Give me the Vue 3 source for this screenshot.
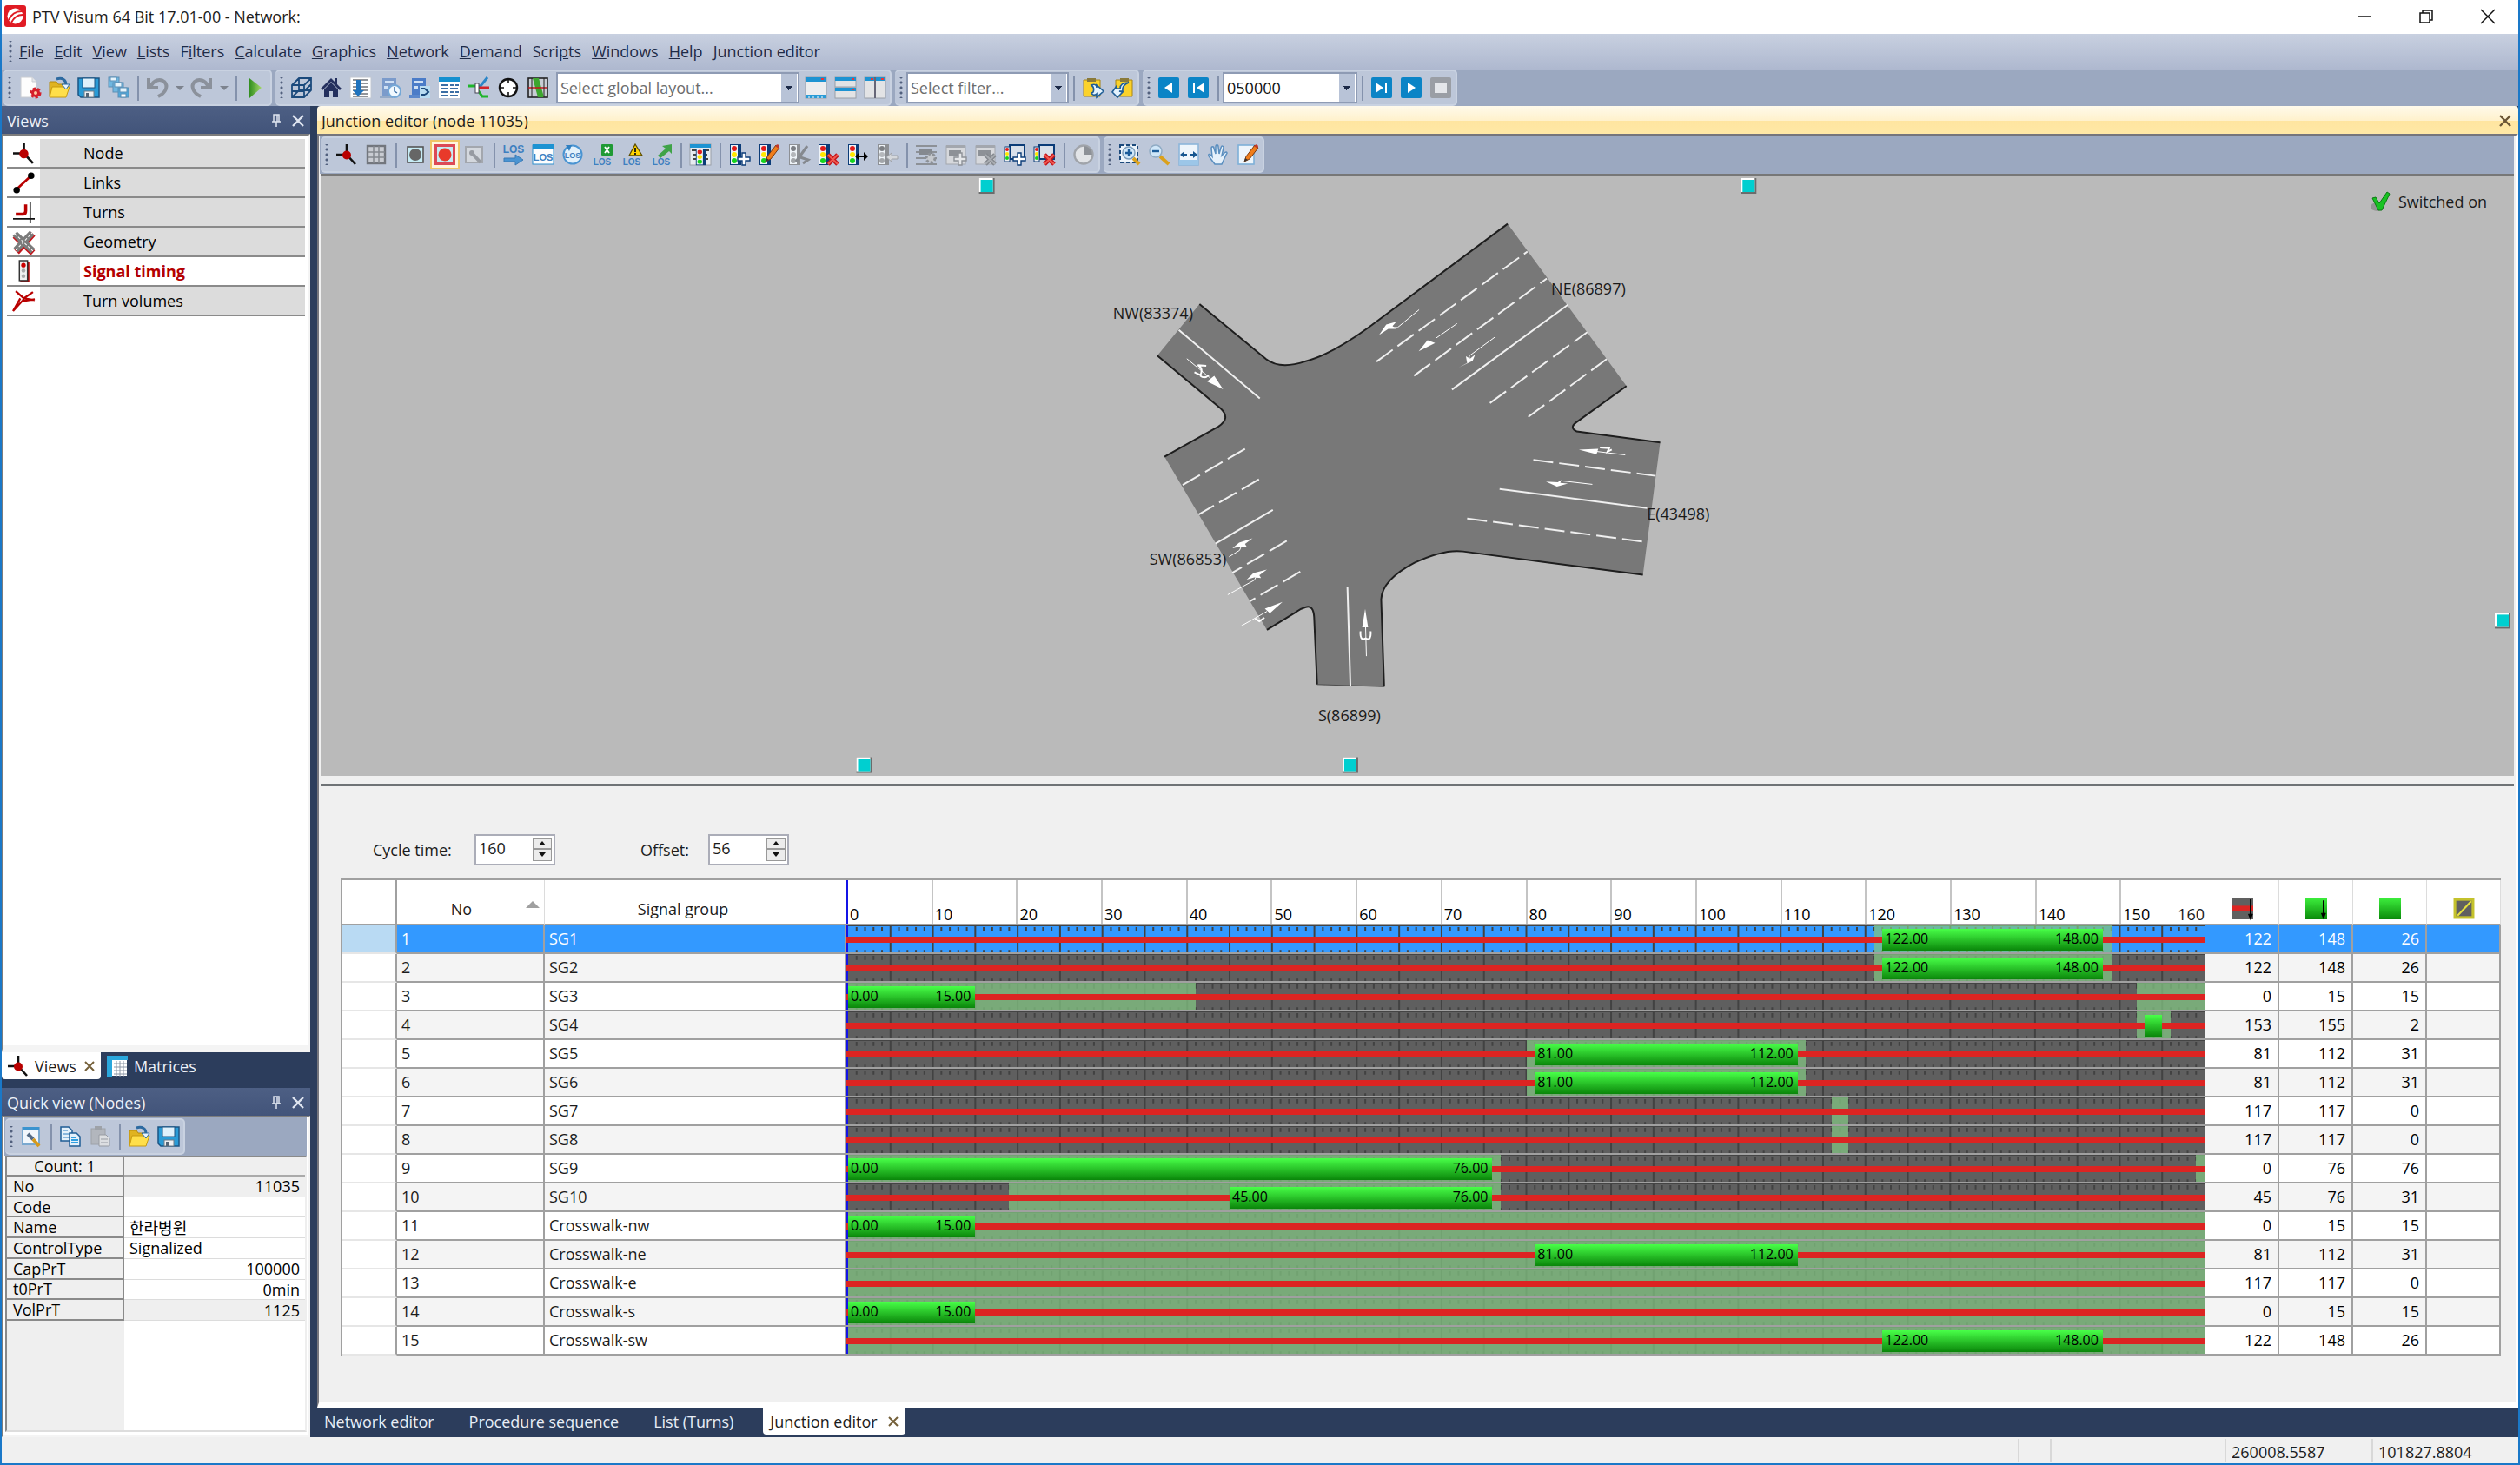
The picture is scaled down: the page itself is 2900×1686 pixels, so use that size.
<script setup>
import { ref } from 'vue'

const los = (y, size = 9) =>
  `<text x="12" y="${y}" font-family="Liberation Sans, sans-serif" font-weight="700" font-size="${size}" text-anchor="middle" fill="#3f7fc0">LOS</text>`
const lamp = (x, body = '#0b3c78', c = ['#e01b1b', '#ffe800', '#16d41c']) =>
  `<rect x="${x}" y="0" width="13" height="24" fill="${body}"/><rect x="${x + 1}" y="1" width="8" height="22" fill="#eef3f8"/>` +
  `<circle cx="${x + 5}" cy="5" r="3" fill="${c[0]}"/><circle cx="${x + 5}" cy="12" r="3" fill="${c[1]}"/><circle cx="${x + 5}" cy="19" r="3" fill="${c[2]}"/>`
const greyLamp = lamp(1, '#8d9095', ['#7d8085', '#b4b7bb', '#a2a5a9'])
const plus = (c = '#0b3c78', f = '#fff') =>
  `<path d="M15 10h4v5h5v4h-5v5h-4v-5h-5v-4h5z" fill="${f}" stroke="${c}" stroke-width="1.4"/>`
const cross = (c = '#c4161c', f = '#ef5a50') =>
  `<path d="M12 12l11 11M23 12l-11 11" stroke="${c}" stroke-width="5"/><path d="M12 12l11 11M23 12l-11 11" stroke="${f}" stroke-width="2"/>`
const pencil =
  '<path d="M8 20l2-6L20 1l4 3-10 13z" fill="#f07d1a" stroke="#7a3a10" stroke-width="1"/><path d="M8 20l1-4 3 2z" fill="#333"/><path d="M19 2l4 3 1-3-2-2z" fill="#c0392b"/>'

const icons = {
  fresh: '<path d="M2 0h13l5 5v18H2z" fill="#fdfdfd" stroke="#c9ccd2"/><path d="M15 0v5h5" fill="#e4e6ea" stroke="#c9ccd2"/><circle cx="19" cy="18" r="5" fill="#d41f2b" stroke="#d41f2b" stroke-width="3" stroke-dasharray="3 2"/><circle cx="19" cy="18" r="2" fill="#ffc9a0"/>',
  open: '<path d="M1 5h8l2 3h9v14H1z" fill="#e0b321" stroke="#b58a0c"/><path d="M4 11h20l-4 12H1z" fill="#ffdf4a" stroke="#c79a10"/><path d="M9 2c7-2 11 1 11 7" fill="none" stroke="#2d6aa0" stroke-width="3"/><path d="M15 8h9l-4 6z" fill="#e8f4ff" stroke="#2d6aa0"/>',
  save: '<path d="M0 1h24v22H3l-3-3z" fill="#2a9bd6" stroke="#1b5584" stroke-width="1.5"/><rect x="5" y="1" width="14" height="11" fill="#dff1fb" stroke="#1b5584"/><rect x="7" y="16" width="11" height="7" fill="#eef0f2" stroke="#6f7c88"/><rect x="9" y="18" width="3" height="5" fill="#567"/>',
  saveall: '<g stroke="#5d8fb5"><rect x="1" y="0" width="12" height="11" fill="#6fb7e0"/><rect x="3" y="0" width="7" height="4" fill="#e6f4fc"/><rect x="6" y="6" width="12" height="11" fill="#6fb7e0"/><rect x="8" y="6" width="8" height="5" fill="#e6f4fc"/><rect x="12" y="12" width="12" height="11" fill="#4fa9dc"/><rect x="14" y="12" width="8" height="5" fill="#e6f4fc"/><rect x="15" y="19" width="6" height="4" fill="#fff"/></g>',
  undo: '<path d="M2 1v11h11" fill="none" stroke="#8b919b" stroke-width="4"/><path d="M4 11C8 3 15 1 20 5c5 5 2 13-7 17" fill="none" stroke="#8b919b" stroke-width="4"/>',
  redo: '<path d="M22 1v11H11" fill="none" stroke="#8b919b" stroke-width="4"/><path d="M20 11C16 3 9 1 4 5c-5 5-2 13 7 17" fill="none" stroke="#8b919b" stroke-width="4"/>',
  play: '<path d="M5 1l14 11L5 24z" fill="url(#gPlay)"/>',
  cube: '<path d="M1 9l8-8h14v14l-8 8H1zM1 9h14v14M15 9l8-8M9 1v14h14M9 15l-8 8M1 16h14l8-8" fill="none" stroke="#1b4a7c" stroke-width="1.8"/>',
  home: '<path d="M0 13L12 1l4 4V1h3v7l5 5-2 2L12 5 2 15z" fill="#24305e"/><path d="M4 14l8-8 8 8v9h-6v-7h-4v7H4z" fill="#24305e"/>',
  sort: '<rect x="0" y="0" width="24" height="24" fill="#fff" stroke="#c2c8d2"/><path d="M3 3h18M3 7h18M3 11h18M3 15h18M3 19h18M3 22h18" stroke="#6d7178" stroke-width="1.6"/><path d="M7 3h5v12h4l-7 7-6-7h4z" fill="#1e72bd"/>',
  clock: '<path d="M3 1h16v20H3z" fill="#7b9bcb"/><path d="M0 21h15v3H0z" fill="#94aac8"/><rect x="6" y="4" width="10" height="3" fill="#cfe0f4"/><rect x="5" y="10" width="5" height="4" fill="#cfe0f4"/><circle cx="17" cy="16" r="7" fill="#f1f9ff" stroke="#74a7d6" stroke-width="2"/><path d="M17 11v5l3 2" fill="none" stroke="#3b6ea5" stroke-width="1.5"/>',
  tree: '<path d="M3 1h16v20H3z" fill="#4b7cc8"/><path d="M0 20h13v4H0z" fill="#5b88cc"/><rect x="6" y="4" width="10" height="3" fill="#cfe0f4"/><rect x="5" y="10" width="5" height="4" fill="#cfe0f4"/><rect x="12" y="10" width="12" height="14" fill="#b9ddf2"/><path d="M14 13h4M14 20h4M18 13l4 4-4 3" fill="none" stroke="#1b4a7c" stroke-width="2"/>',
  list: '<rect width="24" height="24" fill="#fff"/><rect width="24" height="5" fill="#1590cf"/><path d="M3 9h7M3 13h7M3 17h7M3 21h7M13 9h4M19 9h4M13 13h9M13 17h4M19 17h4M13 21h9" stroke="#3b6ea5" stroke-width="2"/>',
  junction: '<path d="M10 10h4l8-10" fill="none" stroke="#2b86c8" stroke-width="3"/><path d="M0 10h8" stroke="#1fb52a" stroke-width="3"/><path d="M11 12h13" stroke="#d2232a" stroke-width="3"/><path d="M11 15l5 7h7" fill="none" stroke="#1fb52a" stroke-width="3"/><rect x="8" y="7" width="4" height="11" fill="#fff" stroke="#445"/>',
  target: '<circle cx="12" cy="12" r="10" fill="#fff" stroke="#111" stroke-width="2.4"/><path d="M12 1v6M12 17v6M1 12h6M17 12h6" stroke="#111" stroke-width="1.6"/>',
  corridor: '<rect x="1" y="1" width="22" height="22" fill="#c8cdd4" stroke="#222" stroke-width="1.6"/><path d="M6 1h7l6 22h-7z" fill="#3da62f"/><path d="M1 12h22" stroke="#c4161c" stroke-width="1.5"/><path d="M5 1v22M19 1v22" stroke="#222"/>',
  win1: '<rect x="0" y="0" width="24" height="24" fill="#ecedef" stroke="#9a9fa8"/><rect width="24" height="5" fill="#1d93d2"/><rect x="18" y="1" width="3" height="2" fill="#e33"/><rect y="20" width="24" height="4" fill="#2a9bd6"/><path d="M4 22v2M9 22v2M14 22v2M19 22v2" stroke="#fff"/>',
  win2: '<rect width="24" height="11" fill="#e2e3e5" stroke="#9a9fa8"/><rect width="24" height="4" fill="#1d93d2"/><rect y="12" width="24" height="12" fill="#e2e3e5" stroke="#9a9fa8"/><rect y="12" width="24" height="4" fill="#1d93d2"/><path d="M19 2h3M19 14h3" stroke="#e33" stroke-width="2"/>',
  win3: '<rect width="24" height="24" fill="#e2e3e5" stroke="#9a9fa8"/><rect width="24" height="4" fill="#1d93d2"/><path d="M12 0v24" stroke="#667" stroke-width="2"/><path d="M7 2h3M19 2h3" stroke="#e33" stroke-width="2"/>',
  pasteOut: '<path d="M1 3h19v19H1z" fill="#fbd22b" stroke="#a88414"/><rect x="5" y="1" width="10" height="4" fill="#8a7a3a"/><path d="M10 9c4-2 6 0 6 3v-3l8 7-8 7v-4c-2 2-5 2-6-1 3 0 4-6 0-9z" fill="#e3f2fd" stroke="#1f5d95" stroke-width="1.6"/>',
  pasteIn: '<path d="M4 3h19v19H4z" fill="#fbd22b" stroke="#a88414"/><rect x="9" y="1" width="10" height="4" fill="#8a7a3a"/><path d="M19 6c-8 0-10 3-10 7H5v-3l-5 7 6 6 6-6-4-1h4c-1-5 2-8 7-10z" fill="#e3f2fd" stroke="#1f5d95" stroke-width="1.6"/>',
  back: '<rect width="24" height="24" rx="2" fill="#0b84c6"/><path d="M16 6L7 12l9 6z" fill="#fff"/>',
  first: '<rect width="24" height="24" rx="2" fill="#0b84c6"/><path d="M19 6l-9 6 9 6z" fill="#fff"/><path d="M7 6v12" stroke="#fff" stroke-width="2"/>',
  last: '<rect width="24" height="24" rx="2" fill="#0b84c6"/><path d="M5 6l9 6-9 6z" fill="#fff"/><path d="M17 6v12" stroke="#fff" stroke-width="2"/>',
  next: '<rect width="24" height="24" rx="2" fill="#0b84c6"/><path d="M8 6l9 6-9 6z" fill="#fff"/>',
  stop: '<rect width="24" height="24" rx="2" fill="#9a9ea5"/><rect x="5" y="6" width="14" height="12" fill="#e4e6ea"/>',
  node: '<path d="M12 0v12M0 12h12M12 12l10 11" fill="none" stroke="#111" stroke-width="2.6"/><circle cx="12" cy="12.5" r="5" fill="#b90000"/>',
  links: '<path d="M4 19L20 4" stroke="#b90000" stroke-width="2.6"/><circle cx="4" cy="20" r="3.6" fill="#000"/><circle cx="20" cy="4" r="3.6" fill="#000"/>',
  turns: '<path d="M19 0v24M0 19h24" stroke="#111" stroke-width="1.6"/><path d="M3 14h8q3 0 3-4V3" fill="none" stroke="#b90000" stroke-width="3.4"/>',
  geometry: '<path d="M4 23L22 3M2 5l20 19" stroke="#c4161c" stroke-width="7"/><path d="M3 21L21 2M2 3l20 19" stroke="#7b7b7b" stroke-width="7"/><path d="M3 21L21 2M2 3l20 19" stroke="#fff" stroke-width="1" stroke-dasharray="3 2"/>',
  signal: '<rect x="8" y="1" width="10" height="23" fill="#b90000"/><rect x="7" y="0" width="9" height="22" fill="#f1f1f1" stroke="#333" stroke-width="1.4"/><circle cx="11.5" cy="5" r="2.5" fill="#c00"/><circle cx="11.5" cy="11" r="2.2" fill="#aaa"/><circle cx="11.5" cy="17" r="2.2" fill="#aaa"/>',
  volumes: '<path d="M0 23L10 12 24 10M3 1l9 8 12 2M22 2L12 9l-2 4M0 23l8-14" fill="none" stroke="#b90000" stroke-width="2.2"/>',
  grid: '<rect x="2" y="2" width="20" height="20" fill="#c9ccd2" stroke="#72767d" stroke-width="2.4"/><path d="M2 9h20M2 15h20M9 2v20M15 2v20" stroke="#84888f" stroke-width="1.5"/>',
  dotGrey: '<rect x="3" y="3" width="18" height="18" fill="#c6ecf5" stroke="#555" stroke-width="1.6"/><circle cx="12" cy="12" r="7" fill="#666"/>',
  dotRed: '<rect x="1.5" y="1.5" width="21" height="21" fill="#c6ecf5" stroke="#dc4a56" stroke-width="3"/><circle cx="12" cy="12" r="7.5" fill="#e83a2a"/>',
  wrenchGrey: '<rect x="2" y="3" width="19" height="18" fill="#d4d8de" stroke="#a3a7ae" stroke-width="2"/><path d="M8 9l11 12" stroke="#979ba2" stroke-width="4"/><circle cx="9" cy="10" r="3" fill="#979ba2"/>',
  wrench: '<rect x="2" y="2" width="19" height="19" fill="#f2f7fc" stroke="#7aa9d0" stroke-width="2"/><rect x="2" y="1" width="19" height="4" fill="#3b94cf"/><path d="M8 9l6 6" stroke="#556b85" stroke-width="4"/><path d="M14 15l7 8" stroke="#d69a1c" stroke-width="4"/>',
  losArrow: los(10, 12) + '<path d="M1 16h13v-4l9 6-9 6v-4H1z" fill="#4a94d2" stroke="#3a78b2"/>',
  losWin: '<rect y="1" width="24" height="22" fill="#fdfdfd" stroke="#2f8fce"/><rect width="24" height="5" fill="#1d93d2"/>' + los(19, 11),
  losRing: '<circle cx="12" cy="12" r="10.5" fill="#e3f1fb" stroke="#4a94d2" stroke-width="2"/><path d="M4 1l7 0-3 7z" fill="#2f7fc0"/>' + los(16),
  losXls: '<rect x="11" y="0" width="13" height="13" rx="1" fill="#1f9a35"/><path d="M15 3l5 7M20 3l-5 7" stroke="#fff" stroke-width="1.8"/>' + los(24, 10),
  losWarn: '<path d="M16 0l8 13H9z" fill="#ffd400" stroke="#5b4b00" stroke-width="1.3"/><path d="M16 4v5M16 10v2" stroke="#111" stroke-width="1.8"/>' + los(24, 10),
  losUp: '<path d="M8 13L17 5l-4-3L24 0v11l-3-3-10 8z" fill="#3fa348"/>' + los(24, 10),
  signalWin: '<rect x="0" y="0" width="24" height="24" fill="#e7ebf0" stroke="#9a9fa8"/><rect width="24" height="4" fill="#1d93d2"/><path d="M2 7h20M4 12h16M3 17h18" stroke="#444" stroke-width="2"/><g transform="translate(5 5) scale(.9 .8)">' + lamp(2) + '</g>',
  sgAdd: lamp(1) + plus(),
  sgEdit: lamp(1) + pencil,
  sgGrey: greyLamp + '<path d="M9 20L22 2M14 15l9 3-6 4" stroke="#85898f" stroke-width="3" fill="none"/>',
  sgDel: lamp(1) + cross(),
  sgMove: lamp(1) + '<path d="M9 14l5-5v4h5V9l5 5-5 5v-4h-5v4z" fill="#000"/>',
  sgBack: greyLamp + '<path d="M11 15l6-5v3h7v4h-7v3z" fill="#d5d8dc" stroke="#9ea2a8"/>',
  gearGrey: '<path d="M0 2h24M0 9h24M0 16h24M0 23h24" stroke="#8d9197" stroke-width="2"/><rect x="4" y="5" width="14" height="7" fill="#85898f"/><circle cx="17" cy="16" r="5" fill="#c5c8cd" stroke="#8d9197" stroke-width="3" stroke-dasharray="3 2"/>',
  addGrey: '<rect x="1" y="2" width="22" height="21" fill="#d6d8dc" stroke="#a3a7ae"/><rect x="1" y="1" width="22" height="3" fill="#a3a7ae"/><rect x="4" y="7" width="14" height="6" fill="#8d9197"/>' + plus('#8d9197', '#e5e7ea'),
  delGrey: '<rect x="1" y="2" width="22" height="21" fill="#d6d8dc" stroke="#a3a7ae"/><rect x="1" y="1" width="22" height="3" fill="#a3a7ae"/><rect x="4" y="7" width="14" height="6" fill="#8d9197"/>' + cross('#85898f', '#a9adb2'),
  stageAdd: '<rect x="6" y="1" width="17" height="16" fill="#d9e0ea" stroke="#0b3c78" stroke-width="2"/><rect x="0" y="3" width="6" height="17" fill="#eee" stroke="#0b3c78"/><circle cx="3" cy="6" r="2" fill="#e01b1b"/><circle cx="3" cy="11" r="2" fill="#ffe800"/><circle cx="3" cy="16" r="2" fill="#16d41c"/>' + plus(),
  stageDel: '<rect x="6" y="1" width="17" height="16" fill="#d9e0ea" stroke="#0b3c78" stroke-width="2"/><rect x="0" y="3" width="6" height="17" fill="#eee" stroke="#0b3c78"/><circle cx="3" cy="6" r="2" fill="#e01b1b"/><circle cx="3" cy="11" r="2" fill="#ffe800"/><circle cx="3" cy="16" r="2" fill="#16d41c"/>' + cross(),
  pie: '<circle cx="12" cy="12" r="10.5" fill="#e2e4e7" stroke="#a0a4aa" stroke-width="2.4"/><path d="M12 12V2a10 10 0 0 1 10 10z" fill="#8d9197"/>',
  zoomArea: '<rect x="1" y="1" width="20" height="20" fill="#eef5fb" stroke="#1b4a7c" stroke-width="2" stroke-dasharray="4 3"/><circle cx="11" cy="10" r="7" fill="#cfe6f8" stroke="#7c9dbb" stroke-width="1.5"/><path d="M11 6v8M7 10h8" stroke="#1b5c9a" stroke-width="2.4"/><path d="M16 16l7 7" stroke="#dba11c" stroke-width="4"/>',
  zoomOut: '<circle cx="8" cy="8" r="7" fill="#cfe6f8" stroke="#8fabc4" stroke-width="1.5"/><path d="M4 8h8" stroke="#1b5c9a" stroke-width="2.4"/><path d="M13 14l10 9" stroke="#dba11c" stroke-width="4"/>',
  fit: '<rect x="1" y="0" width="22" height="24" fill="#eef5fb" stroke="#8db6da" stroke-width="1.6"/><rect x="1" y="18" width="22" height="6" fill="#9cc6e8"/><path d="M2 12l5-4v3h3v2H7v3zM22 12l-5-4v3h-3v2h3v3z" fill="#17568f"/>',
  hand: '<path d="M8 23L2 15c-3-4 0-5 3-1L4 5c0-3 3-3 3 0l2 6V3c0-3 3-3 3 0l1 8 2-7c1-3 3-2 3 0l-2 9 3-3c3-2 4 0 2 2l-5 11z" fill="#e6f1fb" stroke="#5a8ebf" stroke-width="1.5"/>',
  edit: '<rect x="1" y="1" width="18" height="22" fill="#eef5fb" stroke="#7eb0d8" stroke-width="1.6"/>' + pencil,
  copy: '<path d="M1 1h9l4 4v12H1z" fill="#e4f1fb" stroke="#1f5d95" stroke-width="1.5"/><path d="M3 5h6M3 9h8M3 13h8" stroke="#2f7fc0"/><path d="M11 8h8l4 4v11H11z" fill="#e4f1fb" stroke="#1f5d95" stroke-width="1.5"/><path d="M13 13h6M13 16h8M13 19h8" stroke="#2f9fe0" stroke-width="2"/>',
  pasteGrey: '<rect x="2" y="3" width="16" height="18" fill="#b2b6bd" stroke="#9ea2a8"/><rect x="6" y="0" width="8" height="5" fill="#9ea2a8"/><path d="M11 10h8l4 4v9H11z" fill="#dcdee1" stroke="#979ba2"/><path d="M13 15h8M13 19h8" stroke="#979ba2"/>',
  matrix: '<rect x="1" y="1" width="22" height="22" fill="#fff"/><path d="M0 0h24v5H6v19H0z" fill="#2aa7dc"/><path d="M8 9h15M8 13h15M8 17h15M8 21h15M11 6v18M15 6v18M19 6v18" stroke="#8b96a5"/>',
  redStart: '<rect width="24" height="24" fill="#606060"/><rect y="9" width="24" height="6" fill="#dc2422"/><path d="M21 2v20M19 18l2 5 2-5" stroke="#000" stroke-width="1.6" fill="none"/>',
  greenEnd: '<rect width="24" height="24" fill="url(#gGreen)"/><path d="M20 3v18M18 17l2 5 2-5" stroke="#000" stroke-width="1.6" fill="none"/>',
  green: '<rect width="24" height="24" fill="url(#gGreen)"/>',
  amber: '<rect x="2" y="2" width="20" height="20" fill="#606060" stroke="#c4c22c" stroke-width="3"/><path d="M5 20L20 4" stroke="#e6e23c" stroke-width="2"/>',
}

const menus = [
  ['', 'F', 'ile'], ['', 'E', 'dit'], ['', 'V', 'iew'], ['', 'L', 'ists'], ['F', 'i', 'lters'],
  ['', 'C', 'alculate'], ['', 'G', 'raphics'], ['', 'N', 'etwork'], ['', 'D', 'emand'],
  ['Scri', 'p', 'ts'], ['', 'W', 'indows'], ['', 'H', 'elp'], ['', 'J', 'unction editor'],
]

// '|' is a separator; a name that ends in '+' also carries a drop-down arrow
const fileBar = ['fresh', 'open', 'save', 'saveall', '|', 'undo+', 'redo+', '|', 'play']
const viewBar = ['cube', 'home', 'sort', 'clock', 'tree', 'list', 'junction', 'target', 'corridor']
const layoutBar = ['win1', 'win2', 'win3']
const editorBar = [
  'node', 'grid', '|', 'dotGrey', 'dotRed', 'wrenchGrey', '|', 'losArrow', 'losWin', 'losRing', 'losXls', 'losWarn',
  'losUp', '|', 'signalWin', '|', 'sgAdd', 'sgEdit', 'sgGrey', 'sgDel', 'sgMove', 'sgBack', '|', 'gearGrey', 'addGrey',
  'delGrey', 'stageAdd', 'stageDel', '|', 'pie',
]
const zoomBar = ['zoomArea', 'zoomOut', 'fit', 'hand', 'edit']
const quickBar = ['wrench', '|', 'copy', 'pasteGrey', '|', 'open', 'save']

const views = [
  { icon: 'node', label: 'Node' },
  { icon: 'links', label: 'Links' },
  { icon: 'turns', label: 'Turns' },
  { icon: 'geometry', label: 'Geometry' },
  { icon: 'signal', label: 'Signal timing', active: true },
  { icon: 'volumes', label: 'Turn volumes' },
]

const attributes = [
  { name: 'No', value: '11035', num: true, locked: true },
  { name: 'Code', value: '' },
  { name: 'Name', value: '한라병원' },
  { name: 'ControlType', value: 'Signalized' },
  { name: 'CapPrT', value: '100000', num: true },
  { name: 't0PrT', value: '0min', num: true },
  { name: 'VolPrT', value: '1125', num: true, locked: true },
]

const cycle = ref('160')
const offset = ref('56')
const span = 160
const pct = (t) => (t / span) * 100 + '%'
const range = (a, b) => ({ left: pct(a), width: pct(b - a) })

const groups = [
  { name: 'SG1', green: [122, 148], zones: [[121, 149]] },
  { name: 'SG2', green: [122, 148], zones: [[121, 149]] },
  { name: 'SG3', green: [0, 15], zones: [[0, 41], [152, 160]] },
  { name: 'SG4', green: [153, 155], zones: [[152, 156]] },
  { name: 'SG5', green: [81, 112], zones: [[80, 113]] },
  { name: 'SG6', green: [81, 112], zones: [[80, 113]] },
  { name: 'SG7', green: [117, 117], zones: [[116, 118]] },
  { name: 'SG8', green: [117, 117], zones: [[116, 118]] },
  { name: 'SG9', green: [0, 76], zones: [[0, 77], [159, 160]] },
  { name: 'SG10', green: [45, 76], zones: [[19, 77]] },
  { name: 'Crosswalk-nw', green: [0, 15], zones: [[0, 160]] },
  { name: 'Crosswalk-ne', green: [81, 112], zones: [[0, 160]] },
  { name: 'Crosswalk-e', green: [117, 117], zones: [[0, 160]] },
  { name: 'Crosswalk-s', green: [0, 15], zones: [[0, 160]] },
  { name: 'Crosswalk-sw', green: [122, 148], zones: [[0, 160]] },
]
const selected = ref(0)

const scale = Array.from({ length: 16 }, (_, i) => i * 10)
let minor = ''
let major = ''
for (let t = 1; t < span; t++) {
  if (t % 5) minor += `M${t} 1V6M${t} 29V32`
  else major += `M${t} 0V32`
}

const numberIcons = ['redStart', 'greenEnd', 'green', 'amber']
const tabs = ['Network editor', 'Procedure sequence', 'List (Turns)']
const handles = [[766, 12], [1642, 12], [2509, 512], [625, 678], [1184, 678]]
const legs = [
  { text: 'NW(83374)', x: 911, y: 165 },
  { text: 'NE(86897)', x: 1415, y: 137 },
  { text: 'E(43498)', x: 1525, y: 396 },
  { text: 'SW(86853)', x: 953, y: 448 },
  { text: 'S(86899)', x: 1147, y: 628 },
]
</script>

<template>
  <div class="window">
    <svg class="defs" width="0" height="0" aria-hidden="true">
      <linearGradient id="gPlay" x1="0" x2="1"><stop offset="0" stop-color="#2f8d1e" /><stop offset="1" stop-color="#a6d96a" /></linearGradient>
      <linearGradient id="gGreen" x1="0" x2="0" y1="0" y2="1"><stop offset="0" stop-color="#3ef03e" /><stop offset="1" stop-color="#0a8a0a" /></linearGradient>
    </svg>

    <header class="title-bar">
      <svg class="logo" viewBox="0 0 25 25"><rect width="25" height="25" rx="3" fill="#e01b24" /><circle cx="12.5" cy="12.5" r="9" fill="#fff" /><path d="M5 17C8 10 13 7 20 7M8 20C11 14 15 11 21 11" fill="none" stroke="#e01b24" stroke-width="2" /></svg>
      <h1>PTV Visum 64 Bit 17.01-00 - Network:</h1>
      <div class="window-buttons">
        <button aria-label="Minimize"><svg viewBox="0 0 16 16"><path d="M0 8h16" /></svg></button>
        <button aria-label="Restore"><svg viewBox="0 0 16 16"><path d="M1 4h11v11H1zM4 4V1h11v11h-3" /></svg></button>
        <button aria-label="Close"><svg viewBox="0 0 16 16"><path d="M0 0l16 16M16 0L0 16" /></svg></button>
      </div>
    </header>

    <nav class="menu-bar">
      <span class="grip"></span>
      <button v-for="m in menus" :key="m[2]">{{ m[0] }}<u>{{ m[1] }}</u>{{ m[2] }}</button>
    </nav>

    <div class="tool-row">
      <div class="tool-group">
        <span class="grip"></span>
        <template v-for="(name, i) in fileBar" :key="i">
          <span v-if="name === '|'" class="sep"></span>
          <button v-else class="tool" :aria-label="name"><svg viewBox="0 0 24 24" v-html="icons[name.replace('+', '')]"></svg></button>
          <button v-if="name.endsWith('+')" class="drop" :aria-label="name + ' list'"></button>
        </template>
      </div>
      <div class="tool-group">
        <span class="grip"></span>
        <button v-for="name in viewBar" :key="name" class="tool" :aria-label="name"><svg viewBox="0 0 24 24" v-html="icons[name]"></svg></button>
        <label class="combo layout"><select aria-label="Global layout"><option>Select global layout...</option></select></label>
        <button v-for="name in layoutBar" :key="name" class="tool" :aria-label="name"><svg viewBox="0 0 24 24" v-html="icons[name]"></svg></button>
      </div>
      <div class="tool-group">
        <span class="grip"></span>
        <label class="combo filter"><select aria-label="Filter"><option>Select filter...</option></select></label>
        <span class="sep"></span>
        <button class="tool" aria-label="Filter out"><svg viewBox="0 0 24 24" v-html="icons.pasteOut"></svg></button>
        <button class="tool" aria-label="Filter in"><svg viewBox="0 0 24 24" v-html="icons.pasteIn"></svg></button>
      </div>
      <div class="tool-group">
        <span class="grip"></span>
        <button class="tool" aria-label="Previous"><svg viewBox="0 0 24 24" v-html="icons.back"></svg></button>
        <button class="tool" aria-label="First"><svg viewBox="0 0 24 24" v-html="icons.first"></svg></button>
        <span class="sep"></span>
        <label class="combo time"><select aria-label="Time"><option>050000</option></select></label>
        <span class="sep"></span>
        <button class="tool" aria-label="Last"><svg viewBox="0 0 24 24" v-html="icons.last"></svg></button>
        <button class="tool" aria-label="Next"><svg viewBox="0 0 24 24" v-html="icons.next"></svg></button>
        <button class="tool" aria-label="Stop"><svg viewBox="0 0 24 24" v-html="icons.stop"></svg></button>
      </div>
    </div>

    <div class="workspace">
      <aside class="sidebar">
        <section class="panel views-panel">
          <h2 class="panel-title">Views
            <span class="panel-tools">
              <button aria-label="Pin"><svg viewBox="0 0 16 16"><path d="M5 1h6v8H5zM3 9h10M8 9v6M9 1v8" /></svg></button>
              <button aria-label="Close"><svg viewBox="0 0 16 16"><path d="M2 2l12 12M14 2L2 14" stroke-width="2.4" /></svg></button>
            </span>
          </h2>
          <ul class="view-list">
            <li v-for="v in views" :key="v.label" :class="{ active: v.active }">
              <span class="view-icon"><svg viewBox="0 0 24 24" v-html="icons[v.icon]"></svg></span>
              <span class="view-gap"></span>
              <button>{{ v.label }}</button>
            </li>
          </ul>
        </section>
        <div class="side-tabs">
          <button class="side-tab on"><svg viewBox="0 0 24 24" v-html="icons.node"></svg>Views<svg class="x" viewBox="0 0 12 12"><path d="M1 1l10 10M11 1L1 11" /></svg></button>
          <button class="side-tab"><svg viewBox="0 0 24 24" v-html="icons.matrix"></svg>Matrices</button>
        </div>
        <section class="panel quick-panel">
          <h2 class="panel-title">Quick view (Nodes)
            <span class="panel-tools">
              <button aria-label="Pin"><svg viewBox="0 0 16 16"><path d="M5 1h6v8H5zM3 9h10M8 9v6M9 1v8" /></svg></button>
              <button aria-label="Close"><svg viewBox="0 0 16 16"><path d="M2 2l12 12M14 2L2 14" stroke-width="2.4" /></svg></button>
            </span>
          </h2>
          <div class="quick-body">
            <div class="tool-row inner">
              <div class="tool-group">
                <span class="grip"></span>
                <template v-for="(name, i) in quickBar" :key="i">
                  <span v-if="name === '|'" class="sep"></span>
                  <button v-else class="tool" :aria-label="name"><svg viewBox="0 0 24 24" v-html="icons[name]"></svg></button>
                </template>
              </div>
            </div>
            <div class="attr-area">
              <table class="attrs">
                <thead><tr><th scope="col">Count: 1</th><td></td></tr></thead>
                <tbody>
                  <tr v-for="a in attributes" :key="a.name">
                    <th scope="row">{{ a.name }}</th>
                    <td :class="{ num: a.num, locked: a.locked }">{{ a.value }}</td>
                  </tr>
                </tbody>
              </table>
            </div>
          </div>
        </section>
      </aside>

      <main class="editor">
        <h2 class="editor-title">Junction editor (node 11035)
          <button aria-label="Close editor"><svg viewBox="0 0 14 14"><path d="M1 1l12 12M13 1L1 13" /></svg></button>
        </h2>
        <div class="editor-body">
          <div class="tool-row inner">
            <div class="tool-group">
              <span class="grip"></span>
              <template v-for="(name, i) in editorBar" :key="i">
                <span v-if="name === '|'" class="sep"></span>
                <button v-else class="tool" :class="{ pressed: name === 'dotRed' }" :aria-label="name"><svg viewBox="0 0 24 24" v-html="icons[name]"></svg></button>
              </template>
            </div>
            <div class="tool-group">
              <span class="grip"></span>
              <button v-for="name in zoomBar" :key="name" class="tool" :aria-label="name"><svg viewBox="0 0 24 24" v-html="icons[name]"></svg></button>
            </div>
          </div>

          <div class="canvas">
            <svg class="scene" viewBox="0 0 2522 690">
              <svg x="870" y="18" width="760" height="640" viewBox="0 0 1568 1568" preserveAspectRatio="none" class="junction">
                <path class="road" d="M1021 92L1303 549L1183 652Q1167 667 1185 677L1383 708L1342 1081L915 1015Q870 1008 800 1047Q723 1095 721 1150L728 1396L569 1390L562 1200Q560 1165 542 1172Q530 1176 520 1185L450 1236L207 748L335 663Q365 640 340 612L190 463L290 318L448 473Q480 503 540 480Q600 462 690 385Z" />
                <path class="curb" d="M1303 549L1183 652Q1167 667 1185 677L1383 708M1342 1081L915 1015Q870 1008 800 1047Q723 1095 721 1150L728 1396M569 1390L562 1200Q560 1165 542 1172Q530 1176 520 1185L450 1236M207 748L335 663Q365 640 340 612L190 463M290 318L448 473Q480 503 540 480Q600 462 690 385L1021 92" />
                <path class="edge" d="M569 1390L728 1396" />
                <path class="lane" d="M241 391L433 584M889 559L1164 320M1002 839L1352 893M464 898L328 993M641 1115L648 1393" />
                <path class="lane dashed" d="M710 480L1068 170M799 520L1114 246M979 597L1210 397M1070 636L1256 473M1082 757L1372 802M925 922L1352 989M398 726L250 828M431 812L288 911M497 985L368 1075M529 1072L410 1155" />
                <path class="arrow-line" d="M260 472L315 526M811 334L760 384L745 384M901 373L850 415M991 411L930 464L930 474M1300 743L1230 733M1222 826L1148 816L1140 824M360 1030L385 1012L390 998M357 1137L420 1096L426 1082M389 1225L450 1184M686 1310L684 1225" />
                <path class="head" d="M346 558L308 536L325 520ZM716 405L733 376L757 368L748 380L756 388L738 388ZM810 451L831 420L849 428ZM905 497L925 484L922 465L932 472L944 460L938 478ZM1190 728L1236 726L1232 741ZM1112 818L1140 820L1148 814L1146 822L1164 824L1138 832ZM416 978L398 994L402 1002L386 1002L368 1006L384 990ZM450 1066L432 1082L436 1090L420 1088L402 1094L418 1076ZM487 1157L457 1189L445 1176ZM683 1177L676 1229H690Z" />
                <path class="turn" d="M278 510L292 518Q300 500 286 490L306 492M292 520Q302 530 312 518M1240 722L1262 724L1258 734L1268 728M672 1240Q670 1268 684 1260Q698 1268 696 1240M422 1204L432 1212L444 1202" />
              </svg>
              <text v-for="l in legs" :key="l.text" :x="l.x" :y="l.y" class="leg">{{ l.text }}</text>
              <g v-for="(h, i) in handles" :key="i">
                <rect :x="h[0] - 9" :y="h[1] - 9" width="18" height="18" fill="#6b6b6b" />
                <rect :x="h[0] - 9" :y="h[1] - 9" width="16" height="16" fill="#fff" />
                <rect :x="h[0] - 7" :y="h[1] - 7" width="14" height="14" fill="#00cfd0" />
              </g>
            </svg>
            <p class="switched">
              <svg viewBox="0 0 24 24"><ellipse cx="9" cy="18" rx="8" ry="5" fill="#7c7c7c" opacity=".6" /><path d="M3 8l4-1 4 7L20 1l3 2-9 19h-4z" fill="#18c222" stroke="#0a7a12" /></svg>
              Switched on
            </p>
          </div>

          <section class="timing">
            <form class="fields" @submit.prevent>
              <label for="cycle">Cycle time:</label>
              <span class="spin">
                <input id="cycle" v-model="cycle" type="text" />
                <span class="spin-buttons"><button type="button" aria-label="Increase cycle time" class="up"></button><button type="button" aria-label="Decrease cycle time" class="down"></button></span>
              </span>
              <label for="offset" class="second">Offset:</label>
              <span class="spin">
                <input id="offset" v-model="offset" type="text" />
                <span class="spin-buttons"><button type="button" aria-label="Increase offset" class="up"></button><button type="button" aria-label="Decrease offset" class="down"></button></span>
              </span>
            </form>

            <table class="signals">
              <colgroup>
                <col class="c-mark" /><col class="c-no" /><col class="c-name" /><col /><col class="c-num" /><col class="c-num" /><col class="c-num" /><col class="c-num" />
              </colgroup>
              <thead>
                <tr>
                  <th class="mark"></th>
                  <th scope="col" class="no">No<i class="sorted"></i></th>
                  <th scope="col" class="group">Signal group</th>
                  <th scope="col" class="time-head">
                    <div class="scale">
                      <span v-for="t in scale" :key="t" :class="{ zero: t === 0 }" :style="{ left: pct(t) }">{{ t }}</span>
                      <b>160</b>
                    </div>
                  </th>
                  <th v-for="n in numberIcons" :key="n" scope="col" class="num-head"><svg viewBox="0 0 24 24" v-html="icons[n]"></svg></th>
                </tr>
              </thead>
              <tbody>
                <tr v-for="(g, i) in groups" :key="g.name" :class="{ sel: i === selected }" @click="selected = i">
                  <td class="mark"></td>
                  <td>{{ i + 1 }}</td>
                  <td>{{ g.name }}</td>
                  <td class="time">
                    <div class="track">
                      <svg class="ticks" viewBox="0 0 160 32" preserveAspectRatio="none">
                        <path class="major" :d="major" /><path class="minor" :d="minor" />
                      </svg>
                      <span v-for="z in g.zones" :key="z[0]" class="zone" :style="range(z[0], z[1])"></span>
                      <span class="red"></span>
                      <span v-if="g.green[1] > g.green[0]" class="green" :style="range(g.green[0], g.green[1])">
                        <template v-if="g.green[1] - g.green[0] > 5"><span>{{ g.green[0] }}.00</span><span>{{ g.green[1] }}.00</span></template>
                      </span>
                    </div>
                  </td>
                  <td class="n">{{ g.green[0] }}</td>
                  <td class="n">{{ g.green[1] }}</td>
                  <td class="n">{{ g.green[1] - g.green[0] }}</td>
                  <td class="n"></td>
                </tr>
              </tbody>
            </table>
          </section>
        </div>
        <nav class="doc-tabs">
          <button v-for="t in tabs" :key="t">{{ t }}</button>
          <button class="on">Junction editor<svg viewBox="0 0 12 12"><path d="M1 1l10 10M11 1L1 11" /></svg></button>
        </nav>
      </main>
    </div>

    <footer class="status-bar">
      <span class="s1"></span><span class="s2"></span>
      <span class="s4">260008.5587</span><span class="s4">101827.8804</span>
    </footer>
  </div>
</template>

<style>
body {
  margin: 0;
}
</style>

<style scoped>
.window {
  box-sizing: border-box;
  display: flex;
  flex-direction: column;
  min-height: 100vh;
  border: 2px solid #1a78c8;
  border-top: 0;
  background: #9ba8c0;
  color: #1c1c1c;
  font: 18px/24px "Open Sans", "Noto Sans CJK KR", sans-serif;
}
.window *,
.window *::before,
.window *::after {
  box-sizing: border-box;
}
.defs {
  position: absolute;
}
button {
  margin: 0;
  padding: 0;
  border: 0;
  background: none;
  color: inherit;
  font: inherit;
}
h1,
h2,
p,
ul {
  margin: 0;
  padding: 0;
  font: inherit;
}
svg {
  display: block;
  overflow: visible;
}

.title-bar {
  display: flex;
  align-items: center;
  height: 39px;
  padding: 0 27px 2px 3px;
  background: #fff;
}
.logo {
  width: 25px;
  height: 25px;
  margin-right: 7px;
}
.window-buttons {
  display: flex;
  gap: 55px;
  margin-left: auto;
}
.window-buttons svg {
  width: 16px;
  height: 16px;
  fill: none;
  stroke: #111;
  stroke-width: 1.5;
}

.menu-bar {
  display: flex;
  align-items: center;
  gap: 12px;
  height: 41px;
  padding: 0 0 2px 3px;
  background: linear-gradient(#c8d0e0, #aeb8cf);
  color: #1f2b47;
}
.menu-bar .grip {
  margin-right: -8px;
}
.grip {
  flex: none;
  width: 13px;
  height: 24px;
  background: radial-gradient(circle, #51607d 1px, #51607d 1px, transparent 2px) center / 6px 6px repeat-y;
}

.tool-row {
  display: flex;
  gap: 4px;
  height: 42px;
  padding-left: 2px;
  background: #9ba8c0;
}
.tool-group {
  display: flex;
  align-items: center;
  border: 2px solid #c9d2e1;
  border-left-width: 0;
  border-radius: 5px;
  background: #bdc7d9;
}
.tool {
  display: grid;
  flex: none;
  place-items: center;
  width: 34px;
  height: 34px;
}
.tool svg {
  width: 24px;
  height: 24px;
}
.tool.pressed {
  border: 2px solid #f0c566;
  background: #fff5dc;
}
.sep {
  flex: none;
  width: 11px;
  height: 29px;
  background: linear-gradient(#8492ac, #8492ac) center / 2px 100% no-repeat;
}
.drop {
  width: 17px;
  height: 34px;
}
.drop::before {
  content: "";
  display: block;
  width: 0;
  margin: auto;
  border: 5px solid transparent;
  border-top-color: #7d838e;
  border-bottom: 0;
}
.combo {
  display: flex;
  align-items: center;
  height: 36px;
  border: 2px solid #8e9bb4;
  background: #fff;
}
.combo::after {
  content: "";
  flex: none;
  width: 18px;
  height: 32px;
  margin: 0 1px;
  background: linear-gradient(to bottom right, #1c2a48 50%, transparent 50%) 9px 14px / 5px 5px no-repeat,
    linear-gradient(to bottom left, #1c2a48 50%, transparent 50%) 4px 14px / 5px 5px no-repeat, #b8c3d7;
}
.combo select {
  flex: 1;
  min-width: 0;
  height: 100%;
  padding: 0 3px;
  border: 0;
  appearance: none;
  background: none;
  color: #6d6d6d;
  font: inherit;
}
.combo.layout {
  width: 280px;
  margin: 0 2px 0 4px;
}
.combo.filter {
  width: 187px;
}
.combo.time {
  width: 155px;
}
.combo.time select {
  color: #111;
}

.workspace {
  display: flex;
  flex: 1;
  gap: 8px;
  background: #2c3d5c;
}
.sidebar {
  display: flex;
  flex: none;
  flex-direction: column;
  width: 355px;
}
.panel {
  display: flex;
  flex-direction: column;
}
.views-panel {
  flex: 1;
}
.panel-title {
  display: flex;
  align-items: center;
  height: 32px;
  padding: 2px 6px 0;
  background: linear-gradient(#4d5f84, #42547a);
  color: #eef2f9;
}
.panel-tools {
  display: flex;
  gap: 9px;
  margin-left: auto;
}
.panel-tools svg {
  width: 16px;
  height: 16px;
  fill: none;
  stroke: #dfe5f0;
  stroke-width: 1.5;
}
.view-list {
  flex: 1;
  padding: 4px 4px 0;
  border: 2px solid #7d7d7d;
  border-right-color: #f4f4f4;
  border-bottom: 8px solid #f4f4f4;
  background: #fff;
  color: #000;
  list-style: none;
}
.view-list li {
  display: flex;
  height: 34px;
  border-bottom: 2px solid #8a8a8a;
}
.view-icon {
  display: grid;
  place-items: center;
  width: 38px;
  background: #fff;
}
.view-icon svg {
  width: 25px;
  height: 25px;
}
.view-gap {
  width: 46px;
  background: #dcdcdc;
}
.view-list button {
  flex: 1;
  padding-left: 4px;
  background: #dcdcdc;
  text-align: left;
}
.view-list .active button {
  background: #fff;
  color: #b40000;
  font-weight: 700;
}
.side-tabs {
  display: flex;
  align-items: flex-start;
  height: 41px;
  color: #eef2f9;
}
.side-tab {
  display: flex;
  gap: 7px;
  align-items: center;
  height: 31px;
  padding: 0 7px;
}
.side-tab svg {
  width: 24px;
  height: 24px;
}
.side-tab .x,
.doc-tabs svg {
  width: 12px;
  height: 12px;
  margin-left: 2px;
  fill: none;
  stroke: #75603a;
  stroke-width: 2;
}
.side-tab.on {
  border-radius: 0 0 4px 4px;
  background: #fff;
  color: #1c1c1c;
}
.quick-panel {
  height: 402px;
}
.quick-body {
  display: flex;
  flex: 1;
  flex-direction: column;
  padding: 2px 2px 4px 2px;
  border: 2px solid #7d7d7d;
  border-right-color: #f4f4f4;
  border-bottom-color: #f4f4f4;
  background: #fff;
}
.attr-area {
  flex: 1;
  border: 2px solid #8a8a8a;
  border-right-color: #eee;
  border-bottom-color: #ddd;
  background: linear-gradient(to right, #efefef 135px, #fff 135px);
}
.attrs {
  width: 100%;
  height: 188px;
  border-spacing: 0;
  table-layout: fixed;
  color: #000;
  line-height: 20px;
}
.attrs th {
  width: 135px;
  padding: 0 0 0 7px;
  border: solid #8a8a8a;
  border-width: 0 2px 2px 0;
  background: #efefef;
  font-weight: 400;
  text-align: left;
}
.attrs thead th {
  padding: 0;
  text-align: center;
}
.attrs td {
  padding: 0 6px;
  border-bottom: 1px solid #dcdcdc;
  background: #fff;
}
.attrs thead td {
  border-bottom: 2px solid #aaa;
}
.attrs .num {
  text-align: right;
}
.attrs .locked,
.attrs thead td {
  background: #efefef;
}

.editor {
  display: flex;
  flex: 1;
  flex-direction: column;
  min-width: 0;
}
.editor-title {
  display: flex;
  align-items: center;
  justify-content: space-between;
  height: 32px;
  padding: 2px 8px 0 5px;
  border-radius: 4px 4px 0 0;
  background: linear-gradient(#fffaeb, #fff1cc 52%, #ffe5a0 53%, #ffe8a6);
}
.editor-title svg {
  width: 14px;
  height: 14px;
  fill: none;
  stroke: #6b5535;
  stroke-width: 2.4;
}
.editor-body {
  display: flex;
  flex: 1;
  flex-direction: column;
  padding: 2px;
  border: solid #fff;
  border-width: 2px 3px 6px 2px;
  border-top-color: #75757c;
  border-left-color: #75757c;
  background: #f0f0f0;
}
.tool-row.inner {
  flex: none;
  height: 44px;
  margin: -2px 0 0 -1px;
  padding: 1px;
}
.canvas {
  position: relative;
  border-top: 2px solid #777;
  background: #bababa;
}
.scene {
  width: 100%;
}
.junction {
  overflow: visible;
}
.road {
  fill: #787878;
}
.junction path {
  vector-effect: non-scaling-stroke;
}
.curb,
.edge,
.lane,
.arrow-line,
.turn {
  fill: none;
}
.curb {
  stroke: #1e1e1e;
  stroke-width: 2;
}
.edge {
  stroke: #4d4d4d;
}
.lane {
  stroke: #f0f0f0;
  stroke-width: 2;
}
.dashed {
  stroke-dasharray: 23 7;
}
.arrow-line {
  stroke: #fff;
  stroke-width: 1;
}
.turn {
  stroke: #fff;
  stroke-width: 2;
}
.head {
  fill: #fff;
}
.leg {
  fill: #1a1a1a;
}
.switched {
  position: absolute;
  top: 17px;
  right: 31px;
  display: flex;
  gap: 9px;
  align-items: center;
  line-height: 26px;
}
.switched svg {
  width: 24px;
  height: 24px;
}

.timing {
  flex: 1;
  margin-top: 9px;
  padding: 54px 15px 0 23px;
  border-top: 3px solid #6f7376;
}
.fields {
  display: flex;
  align-items: center;
  height: 38px;
  margin-bottom: 14px;
  padding-left: 37px;
}
.fields label {
  width: 117px;
}
.fields .second {
  width: 78px;
  margin-left: 98px;
}
.spin {
  display: flex;
  width: 93px;
  height: 36px;
  border: 2px solid #abadb8;
  background: #fff;
}
.spin input {
  flex: 1;
  min-width: 0;
  height: 28px;
  padding: 0 3px;
  border: 0;
  outline: 0;
  background: none;
  color: inherit;
  font: inherit;
}
.spin-buttons {
  display: flex;
  flex-direction: column;
  width: 22px;
  margin: 2px 2px 3px 0;
}
.spin-buttons button {
  flex: 1;
  border: 1px solid #999;
  background: #ececec;
}
.spin-buttons button::before {
  content: "";
  display: block;
  width: 0;
  margin: auto;
  border: solid transparent;
  border-width: 0 4px 5px;
  border-bottom-color: #111;
}
.spin-buttons .down::before {
  border-width: 5px 4px 0;
  border-top-color: #111;
}

.signals {
  width: 100%;
  border: solid #a0a0a0;
  border-width: 2px 0 0 2px;
  border-spacing: 0;
  table-layout: fixed;
}
.c-mark {
  width: 63px;
}
.c-no {
  width: 170px;
}
.c-name {
  width: 347px;
}
.c-num {
  width: 85px;
}
.signals th {
  height: 52px;
  padding: 16px 0 0;
  border-right: 1px solid #dcdcdc;
  border-bottom: 2px solid #a0a0a0;
  background: #fff;
  font-weight: 400;
}
.signals th.mark {
  border-right: 2px solid #a0a0a0;
}
.signals .no {
  padding-right: 5px;
}
.sorted {
  float: right;
  margin: 3px 0 0;
  border: solid transparent;
  border-width: 0 8px 8px;
  border-bottom-color: #a0a0a0;
}
.signals .group {
  padding-right: 28px;
}
.signals .time-head {
  padding: 0;
  border-right-color: #a0a0a0;
}
.scale {
  position: relative;
  height: 50px;
}
.scale span {
  position: absolute;
  bottom: 0;
  height: 50px;
  padding: 27px 0 0 2px;
  border-left: 2px solid #c4c4c4;
  color: #000;
  line-height: 24px;
}
.scale .zero {
  border-color: #1414e6;
}
.scale b {
  position: absolute;
  right: 0;
  bottom: -1px;
  font-weight: 400;
}
.num-head svg {
  width: 25px;
  height: 25px;
  margin: auto;
}
.signals td {
  height: 33px;
  padding: 0 5px;
  border: solid #a0a0a0;
  border-width: 0 2px 2px 0;
  background: #fff;
}
.signals tr:nth-child(even) td {
  background: #f4f4f4;
}
.signals td.mark,
.signals tr:nth-child(even) td.mark {
  border-bottom-color: #e6e6e6;
  background: #fff;
}
.signals .n {
  padding-right: 7px;
  color: #000;
  text-align: right;
}
.signals tr.sel td {
  background: #3399ff;
  color: #fff;
}
.signals tr.sel td.mark {
  background: #b9daf3;
}
.signals td.time {
  padding: 0;
  border-right-width: 1px;
}
.track {
  position: relative;
  height: 31px;
  border-left: 2px solid #1414e6;
  background: #5f5f5f;
}
.sel .track {
  background: #3399ff;
}
.ticks {
  position: absolute;
  inset: 0;
  width: 100%;
  height: 100%;
  border-top: 1px solid #444;
}
.ticks path {
  fill: none;
  stroke: #424242;
  stroke-width: 2;
  vector-effect: non-scaling-stroke;
}
.zone {
  position: absolute;
  top: 0;
  bottom: 0;
  background: rgba(130, 195, 130, 0.75);
}
.red {
  position: absolute;
  top: 13px;
  right: 0;
  left: -2px;
  height: 7px;
  background: #dc2422;
}
.green {
  position: absolute;
  top: 4px;
  bottom: 2px;
  display: flex;
  justify-content: space-between;
  padding: 0 5px 0 3px;
  background: linear-gradient(#48ff48, #0a860a);
  color: #000;
  font-size: 16px;
  line-height: 22px;
}

.doc-tabs {
  display: flex;
  height: 34px;
  gap: 40px;
  padding-left: 8px;
  color: #e8edf6;
}
.doc-tabs button {
  height: 31px;
}
.doc-tabs .on {
  display: flex;
  gap: 10px;
  align-items: center;
  margin-left: -6px;
  padding: 0 8px;
  border-radius: 0 0 4px 4px;
  background: #fff;
  color: #1c1c1c;
}

.status-bar {
  display: flex;
  justify-content: flex-end;
  height: 30px;
  padding: 2px 0;
  background: #f0f0f0;
}
.status-bar span {
  padding: 3px 0 0 6px;
  border-left: 2px solid #d8d8d8;
}
.s1 {
  width: 37px;
}
.s2 {
  width: 201px;
}
.s4 {
  width: 169px;
}
</style>
